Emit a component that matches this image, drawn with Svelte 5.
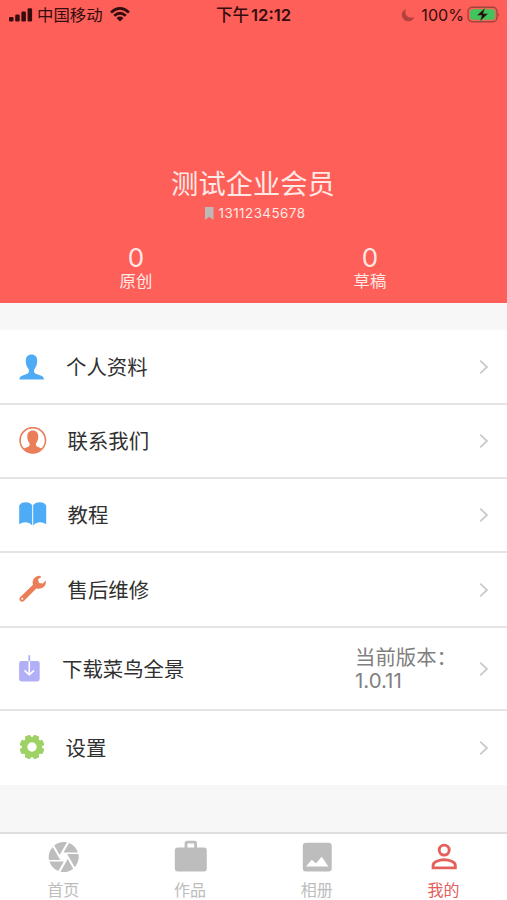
<script>
  const rows = [
    { icon: 'person', label: '个人资料', height: 75, indent: 66 },
    { icon: 'contact', label: '联系我们', height: 74, indent: 67.5 },
    { icon: 'book', label: '教程', height: 74, indent: 67.5 },
    { icon: 'wrench', label: '售后维修', height: 75, indent: 67.5 },
    { icon: 'download', label: '下载菜鸟全景', height: 83, indent: 62, detail: ['当前版本：', '1.0.11'] },
    { icon: 'gear', label: '设置', height: 74, indent: 65.5 }
  ];
  const stats = [
    { value: 0, label: '原创' },
    { value: 0, label: '草稿' }
  ];
  const tabs = [
    { icon: 'camera', label: '首页' },
    { icon: 'work', label: '作品' },
    { icon: 'photo', label: '相册' },
    { icon: 'me', label: '我的', active: true }
  ];
  const teeth = [0, 45, 90, 135, 180, 225, 270, 315];
</script>

<div class="screen">
  <header>
    <div class="status">
      <div class="left">
        <svg width="24" height="14" viewBox="0 0 24 14" fill="#350d0e">
          <rect x="0" y="9" width="4.5" height="4.5" rx="1.2" />
          <rect x="6.2" y="6.5" width="4.5" height="7" rx="1.2" />
          <rect x="12.4" y="3.5" width="4.5" height="10" rx="1.2" />
          <rect x="18.6" y="0.3" width="4.5" height="13.2" rx="1.2" />
        </svg>
        <span class="carrier">中国移动</span>
        <svg width="20" height="15" viewBox="0 0 20 15" fill="none" stroke="#350d0e" stroke-width="2.7">
          <path d="M1 5.4Q10-2.5 19 5.4M4.2 8.8Q10 3.7 15.8 8.8" />
          <path d="M6.5 10.9Q10 8 13.5 10.9L10 14.6Z" fill="#350d0e" stroke="none" />
        </svg>
      </div>
      <div class="clock">下午<b>12:12</b></div>
      <div class="right">
        <svg width="14" height="14" viewBox="0 0 14 14" fill="#b3413e">
          <path d="M5 .9C1.8 2.2.4 5 1 7.9C1.7 11.2 4.3 13.2 7.4 13.2C10.1 13.2 12.3 11.8 13.3 9.3C10.3 10.3 7.3 9.7 5.6 7.6C4.1 5.7 4 3.2 5 .9Z" />
        </svg>
        <span class="percent">100%</span>
        <svg width="34" height="18" viewBox="0 0 34 18">
          <rect x="1" y="1.2" width="29" height="14.6" rx="4.3" fill="none" stroke="#a3443c" stroke-width="1.4" />
          <rect x="3" y="3.2" width="25" height="10.6" rx="2.5" fill="#42c45c" />
          <path d="M31.3 6.2Q33 8.5 31.3 10.8Z" fill="#a3443c" />
          <path d="M18.2 1.8L9.8 9.4H14.7L12.8 15.5L21.2 7.6H16.3Z" fill="#260b0b" stroke="#42c45c" stroke-width=".5" />
        </svg>
      </div>
    </div>
    <div class="name">测试企业会员</div>
    <div class="phone">
      <svg width="9" height="13" viewBox="0 0 9 13"><path d="M0 0H8.5V13L4.25 9.7L0 13Z" fill="#bdb9b9" /></svg>
      <span>13112345678</span>
    </div>
    <div class="stats">
      {#each stats as s}
        <div class="stat"><span class="value">{s.value}</span><span class="caption">{s.label}</span></div>
      {/each}
    </div>
  </header>

  <main>
    {#each rows as r}
      <div class="row" style="height: {r.height}px">
        <div class="icon" style="width: {r.indent}px">
          {#if r.icon === 'person'}
            <svg width="26" height="26" viewBox="0 0 26 26"><path fill="#4eabf5" d="M12.5.5C8.9.5 6.8 3 6.8 6.7C6.8 10 7.7 12.6 9.2 14.4C10.3 16 10.2 18.5 8.8 19.6L2.4 22.1Q.5 23 .3 25.5H25Q24.8 23 22.9 22.1L16.2 19.6C14.8 18.5 14.7 16 15.8 14.4C17.3 12.6 18.2 10 18.2 6.7C18.2 3 16.1.5 12.5.5Z" /></svg>
          {:else if r.icon === 'contact'}
            <svg width="28" height="28" viewBox="0 0 28 28"><circle cx="13.8" cy="13.3" r="12.7" fill="none" stroke="#ea7e59" stroke-width="1.6" /><path fill="#ea7e59" d="M13.8 3.5C10.2 3.5 8.3 5.9 8.3 9.3C8.3 12.5 9.1 14.7 10.4 16.1Q11.2 18.4 9.8 19.5L4.7 21.6Q8.4 26.5 13.8 26.5T22.9 21.6L17.8 19.5Q16.4 18.4 17.2 16.1C18.5 14.7 19.3 12.5 19.3 9.3C19.3 5.9 17.4 3.5 13.8 3.5Z" /></svg>
          {:else if r.icon === 'book'}
            <svg class="book" width="28" height="24" viewBox="0 0 28 24"><path fill="#4eabf5" d="M.2 3.6Q2 .2 6.5.2Q11.4.2 13.2 3.2V23.6Q11.3 20.8 7 20.3Q3.5 20 .2 22.2ZM14.2 3.2Q16 .2 20.9.2Q25.4.2 27.2 3.6V22.2Q23.9 20 20.4 20.3Q16.1 20.8 14.2 23.6Z" /></svg>
          {:else if r.icon === 'wrench'}
            <svg class="wrench" width="28" height="28" viewBox="0 0 28 28"><path fill="#ea7e59" fill-rule="evenodd" d="M21.6.9Q17.4.2 14.9 3.4Q12.9 6.2 14 9.7L1.3 22Q-.4 24.2 1.2 26Q3.2 27.6 5.2 25.8L17.3 13.4Q21.8 14.6 24.9 11.8Q27.5 9.2 26.8 5.6L23.8 8.4L20 8.1L19.1 4.3L22 2.2ZM3.3 22.7A1 1 0 1 1 3.3 24.7A1 1 0 1 1 3.3 22.7Z" /></svg>
          {:else if r.icon === 'download'}
            <svg width="21" height="27" viewBox="0 0 21 27"><rect x=".1" y="6.1" width="20.6" height="20.4" rx="2.4" fill="#b1aff5" /><path d="M10.3.2V7" stroke="#b1aff5" stroke-width="1.8" /><path d="M10.3 6V19.2M5.5 15.3L10.3 19.8L15.1 15.3" fill="none" stroke="#fff" stroke-width="1.6" /></svg>
          {:else}
            <svg class="gear" width="26" height="26" viewBox="-13 -13 26 26"><g fill="#9fd264">{#each teeth as a}<path d="M-3.6-8.5L-2.8-11.6Q-2.5-12.4-1.7-12.4H1.7Q2.5-12.4 2.8-11.6L3.6-8.5Z" transform="rotate({a + 22.5})" />{/each}</g><circle r="7.4" fill="none" stroke="#9fd264" stroke-width="5.4" /></svg>
          {/if}
        </div>
        <span class="label">{r.label}</span>
        {#if r.detail}
          <div class="detail">{#each r.detail as line}<div>{line}</div>{/each}</div>
        {/if}
        <svg class="chevron" width="10" height="16" viewBox="0 0 10 16"><path d="M1.2 1.6L8 8L1.2 14.4" fill="none" stroke="#cacacc" stroke-width="1.8" /></svg>
      </div>
    {/each}
  </main>

  <nav>
    {#each tabs as t}
      <div class="tab" class:active={t.active}>
        <svg width="36" height="36" viewBox="0 0 36 36" fill="currentColor">
          {#if t.icon === 'camera'}
            <path transform="translate(.7 0) scale(1.5)" d="M9.4 10.5l4.77-8.26C13.47 2.09 12.75 2 12 2c-2.4 0-4.6.85-6.32 2.25l3.66 6.35.06-.1zM21.54 9c-.92-2.92-3.15-5.26-6-6.34L11.88 9h9.66zm.26 1h-7.49l.29.5 4.76 8.25C21 16.97 22 14.61 22 12c0-.69-.07-1.35-.2-2zM8.54 12l-3.9-6.75C3.01 7.03 2 9.39 2 12c0 .69.07 1.35.2 2h7.49l-1.15-2zm-6.08 3c.92 2.92 3.15 5.26 6 6.34L12.12 15H2.46zm11.27 0l-3.9 6.76c.7.15 1.42.24 2.17.24 2.4 0 4.6-.85 6.32-2.25l-3.66-6.35-.93 1.6z" />
          {:else if t.icon === 'work'}
            <rect x="2.8" y="8.5" width="32" height="24" rx="3" />
            <path d="M14 9V4.3Q14 3.2 15.1 3.2H22.5Q23.6 3.2 23.6 4.3V9" fill="none" stroke="currentColor" stroke-width="2.8" />
          {:else if t.icon === 'photo'}
            <path fill-rule="evenodd" d="M7 3.7H29.5Q32.7 3.7 32.7 6.9V29.3Q32.7 32.5 29.5 32.5H7Q3.8 32.5 3.8 29.3V6.9Q3.8 3.7 7 3.7ZM7 27.6H29.4L22.7 17.8L16.9 24.4L12.8 20.7Z" />
          {:else}
            <g fill="none" stroke="currentColor" stroke-width="2.9"><circle cx="18.2" cy="11.1" r="5" /><path d="M7.1 28.9V26.2C7.1 22.8 13.3 20.8 18.2 20.8S29.3 22.8 29.3 26.2V28.9Z" /></g>
          {/if}
        </svg>
        <span>{t.label}</span>
      </div>
    {/each}
  </nav>
</div>

<style>
  .screen {
    width: 507px;
    height: 900px;
    display: flex;
    flex-direction: column;
    overflow: hidden;
    background: #f7f7f7;
    font-family: Inter, "Noto Sans CJK SC", sans-serif;
  }
  svg { display: block; flex: none; }
  header {
    height: 303px;
    flex: none;
    background: #fe5f58;
    color: #ffe9e6;
  }
  .status {
    height: 28px;
    display: grid;
    grid-template-columns: 1fr 120px 1fr;
    align-items: center;
    color: #350d0e;
    font-size: 16px;
  }
  .left, .right { display: flex; align-items: center; }
  .left { padding-left: 9px; }
  .carrier { margin: 0 7px 0 4px; padding-top: 1px; font-size: 16.4px; line-height: 28px; }
  .clock { text-align: center; font-size: 16.6px; font-weight: 500; white-space: nowrap; line-height: 28px; }
  .clock b { font-weight: 600; margin-left: 2px; }
  .right { justify-content: flex-end; padding-right: 6px; }
  .percent { margin: 0 3px 0 6px; font-size: 16.1px; }
  .name {
    margin-top: 137px;
    height: 38px;
    line-height: 40px;
    font-size: 27.3px;
    text-align: center;
    padding-right: 1px;
  }
  .phone {
    height: 20px;
    display: flex;
    align-items: center;
    justify-content: center;
    gap: 5px;
    padding-left: 3px;
    font-size: 13.4px;
    letter-spacing: .45px;
  }
  .stats { display: flex; padding: 21px 20px 0 19px; }
  .stat { flex: 1; display: flex; flex-direction: column; align-items: center; }
  .value { font-size: 26px; line-height: 27px; }
  .caption { font-size: 16.4px; line-height: 21px; }
  main { margin-top: 27px; background: #fff; }
  .row {
    box-sizing: border-box;
    display: flex;
    align-items: center;
    border-bottom: 2px solid #e4e4e5;
    padding-right: 18px;
  }
  .row:last-child { border-bottom: 0; }
  .icon { box-sizing: border-box; padding-left: 19px; flex: none; }
  .book, .wrench, .gear { margin-bottom: 2px; }
  .label { padding-top: 2px; font-size: 20.4px; line-height: 30px; color: #303030; white-space: nowrap; }
  .detail { margin-left: auto; width: 105px; margin-right: 19px; font-size: 20.4px; line-height: 23px; color: #808080; white-space: nowrap; }
  .chevron { margin-left: auto; }
  .detail + .chevron { margin-left: 0; }
  nav {
    box-sizing: border-box;
    height: 68px;
    margin-top: auto;
    border-top: 2px solid #dedede;
    background: #fff;
    display: flex;
  }
  .tab {
    flex: 1;
    display: flex;
    flex-direction: column;
    align-items: center;
    padding-top: 5px;
    color: #bdbdbd;
    font-size: 16px;
    line-height: 30px;
  }
  .active { color: #e3605c; }
</style>
